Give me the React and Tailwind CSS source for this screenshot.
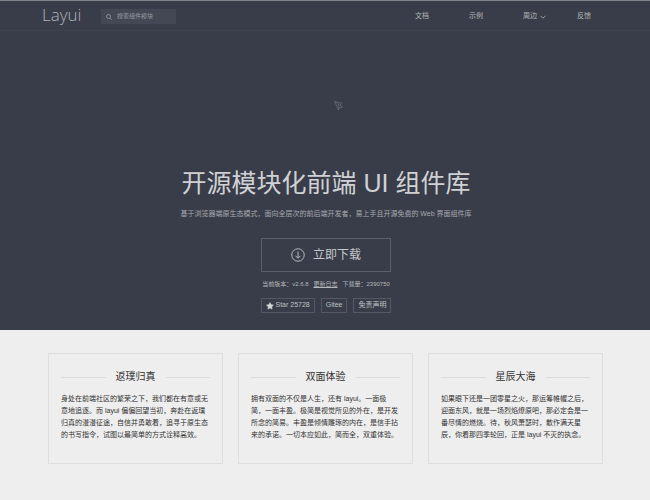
import React from "react";

const navItems = [
  { label: "文档" },
  { label: "示例" },
  { label: "周边", more: true },
  { label: "反馈" },
];

const features = [
  {
    title: "返璞归真",
    text: "身处在前端社区的繁荣之下，我们都在有意或无意地追逐。而 layui 偏偏回望当初，奔赴在返璞归真的漫漫征途，自信并勇敢着，追寻于原生态的书写指令，试图以最简单的方式诠释高效。",
  },
  {
    title: "双面体验",
    text: "拥有双面的不仅是人生，还有 layui。一面极简，一面丰盈。极简是视觉所见的外在，是开发所念的简易。丰盈是倾情雕琢的内在，是信手拈来的承诺。一切本应如此，简而全，双重体验。",
  },
  {
    title: "星辰大海",
    text: "如果眼下还是一团零星之火，那运筹帷幄之后，迎面东风，就是一场烈焰燎原吧，那必定会是一番尽情的燃烧。待，秋风萧瑟时，散作满天星辰，你看那四季轮回，正是 layui 不灭的执念。",
  },
];

function Header() {
  return (
    <header className="flex h-[30px] items-center border-b border-[#3f4350] pt-[2px] pr-[59px] pl-[42px]">
      <a href="#" className="w-[59px] self-start font-['Open_Sans'] text-[17px] leading-[24px] font-light text-[#b0b3ba]">
        Layui
      </a>
      <label className="flex h-[15px] w-[75px] items-center gap-[5px] bg-[#444854] pl-[5px]">
        <svg className="size-[6px] shrink-0 text-[#a0a3aa]" viewBox="0 0 12 12" fill="none" stroke="currentColor" strokeWidth="1.4" aria-hidden="true">
          <circle cx="5" cy="5" r="4" />
          <path d="M8 8l3.500 3.500" />
        </svg>
        <input
          type="search"
          aria-label="搜索组件模块"
          placeholder="搜索组件模块"
          className="w-full min-w-0 bg-transparent text-[6px] leading-[15px] text-[#c2c4c8] outline-none placeholder:text-[#989ba2]"
        />
      </label>
      <nav className="ml-auto flex items-center gap-[40px] text-[7px] text-[#b4b6bb]">
        {navItems.map((item) => (
          <a key={item.label} href="#" className={item.more ? "-mr-[9px] flex items-center gap-[3px]" : ""}>
            {item.label}
            {item.more && (
              <svg className="size-[6px]" viewBox="0 0 12 12" fill="none" stroke="currentColor" strokeWidth="1.6" aria-hidden="true">
                <path d="M1 3.500l5 5 5-5" />
              </svg>
            )}
          </a>
        ))}
      </nav>
    </header>
  );
}

function Hero() {
  return (
    <section className="flex flex-col items-center pb-[17px] pl-[2px]">
      <svg className="mt-[70px] ml-[26px] h-[10px] w-[10px]" viewBox="0 0 20 20" fill="none" stroke="#7d818b" strokeWidth="1" aria-hidden="true">
        <path d="M1 1L15 4L12 9L17 12L11 13L9 18Z" />
        <path d="M1 1L12 9L7 10M8 3L9 18" strokeDasharray="2 1" />
      </svg>
      <h1 className="mt-[52px] text-[25px] leading-[40px] font-normal text-[#d0d1d4]">
        开源模块化前端 UI 组件库
      </h1>
      <p className="mt-[4px] text-[7px] leading-[14px] text-[#a6a8ae]">
        基于浏览器端原生态模式，面向全层次的前后端开发者，易上手且开源免费的 Web 界面组件库
      </p>
      <button type="button" className="mt-[17px] flex h-[34px] w-[130px] items-center justify-center gap-[8px] border border-[#5b5f6b] text-[12px] text-[#c4c5c9]">
        <svg className="size-[14px]" viewBox="0 0 28 28" fill="none" stroke="currentColor" strokeWidth="1.800" aria-hidden="true">
          <circle cx="14" cy="14" r="12.500" />
          <path d="M14 7v13M9 15.500l5 5 5-5" />
        </svg>
        立即下载
      </button>
      <p className="mt-[7px] flex gap-[5px] text-[6px] leading-[10px] text-[#b5b7bc]">
        <span>当前版本：v2.6.8</span>
        <a href="#" className="underline">更新日志</a>
        <span>下载量：2390750</span>
      </p>
      <div className="mt-[9px] flex gap-[6px] text-[7px] text-[#bfc1c5]">
        <a href="#" className="flex h-[15px] items-center gap-[2px] border border-[#555965] px-[4px]">
          <svg className="size-[8px] text-[#d5d6d9]" viewBox="0 0 20 20" fill="currentColor" stroke="currentColor" strokeWidth="1.500" strokeLinejoin="round" aria-hidden="true">
            <path d="M10 1.500l2.600 5.400 6 .8-4.400 4.100 1.100 5.900L10 14.800l-5.300 2.900 1.100-5.900L1.400 7.700l6-.8z" />
          </svg>
          Star 25728
        </a>
        <a href="#" className="flex h-[15px] items-center border border-[#555965] px-[4px]">Gitee</a>
        <a href="#" className="flex h-[15px] items-center border border-[#555965] px-[4px]">免责声明</a>
      </div>
    </section>
  );
}

function FeatureCard({ title, text }) {
  return (
    <article className="border border-[#dedede] px-[12px] pt-[15px] pb-[22px]">
      <h2 className="flex items-center gap-[10px] text-[10px] leading-[16px] text-[#333]">
        <span className="h-px flex-1 bg-[#dcdcdc]" />
        {title}
        <span className="h-px flex-1 bg-[#dcdcdc]" />
      </h2>
      <p className="mt-[8px] text-[7px] leading-[12px] text-[#333]">{text}</p>
    </article>
  );
}

export default function App() {
  return (
    <div className="min-h-screen bg-[#eee] font-['Liberation_Sans','Noto_Sans_CJK_SC',sans-serif]">
      <div className="border-t border-[#80858b] bg-[#393d49]">
        <Header />
        <Hero />
      </div>
      <div className="pl-px">
        <main className="mx-auto grid max-w-[555px] grid-cols-3 gap-[15px] pt-[23px]">
          {features.map((feature) => (
            <FeatureCard key={feature.title} {...feature} />
          ))}
        </main>
      </div>
    </div>
  );
}
